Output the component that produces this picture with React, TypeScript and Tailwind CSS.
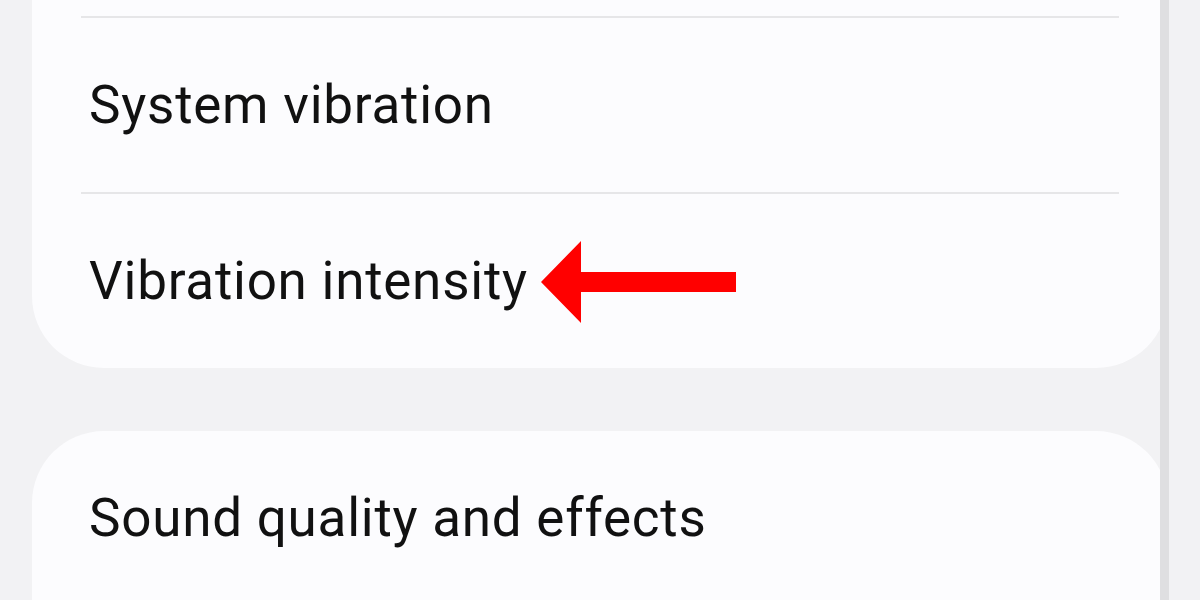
import React from "react";

const Divider = () => <div className="mx-[49px] h-[2px] bg-[#e6e6e8]" />;

const Row = ({ label, children }: { label: string; children?: React.ReactNode }) => (
    <div className="flex h-[174px] items-center px-[57px]">
        <span className="text-[53px] leading-none text-[#111111] font-['Roboto',sans-serif] tracking-[0.75px]">
            {label}
        </span>
        {children}
    </div>
);

const Arrow = () => (
    <svg width="196" height="82" viewBox="0 0 196 82" className="ml-[13px] mt-[2px]">
        <polygon points="0,41 40,0 40,31 195,31 195,51 40,51 40,82" fill="#ff0000" />
    </svg>
);

export default function App() {
    return (
        <div className="relative h-[600px] w-[1200px] overflow-hidden bg-[#f2f2f4]">
            <div className="flex flex-col gap-[63px] pl-[32px] pr-[32px]">
                <div className="rounded-b-[72px] bg-[#fcfcfe] pt-[16px]">
                    <Divider />
                    <Row label="System vibration" />
                    <Divider />
                    <Row label="Vibration intensity">
                        <Arrow />
                    </Row>
                </div>
                <div className="h-[300px] rounded-t-[72px] bg-[#fcfcfe]">
                    <Row label="Sound quality and effects" />
                </div>
            </div>
            <div className="absolute right-[31px] top-0 h-full w-[9px] bg-[#dfdfe1]" />
        </div>
    );
}
